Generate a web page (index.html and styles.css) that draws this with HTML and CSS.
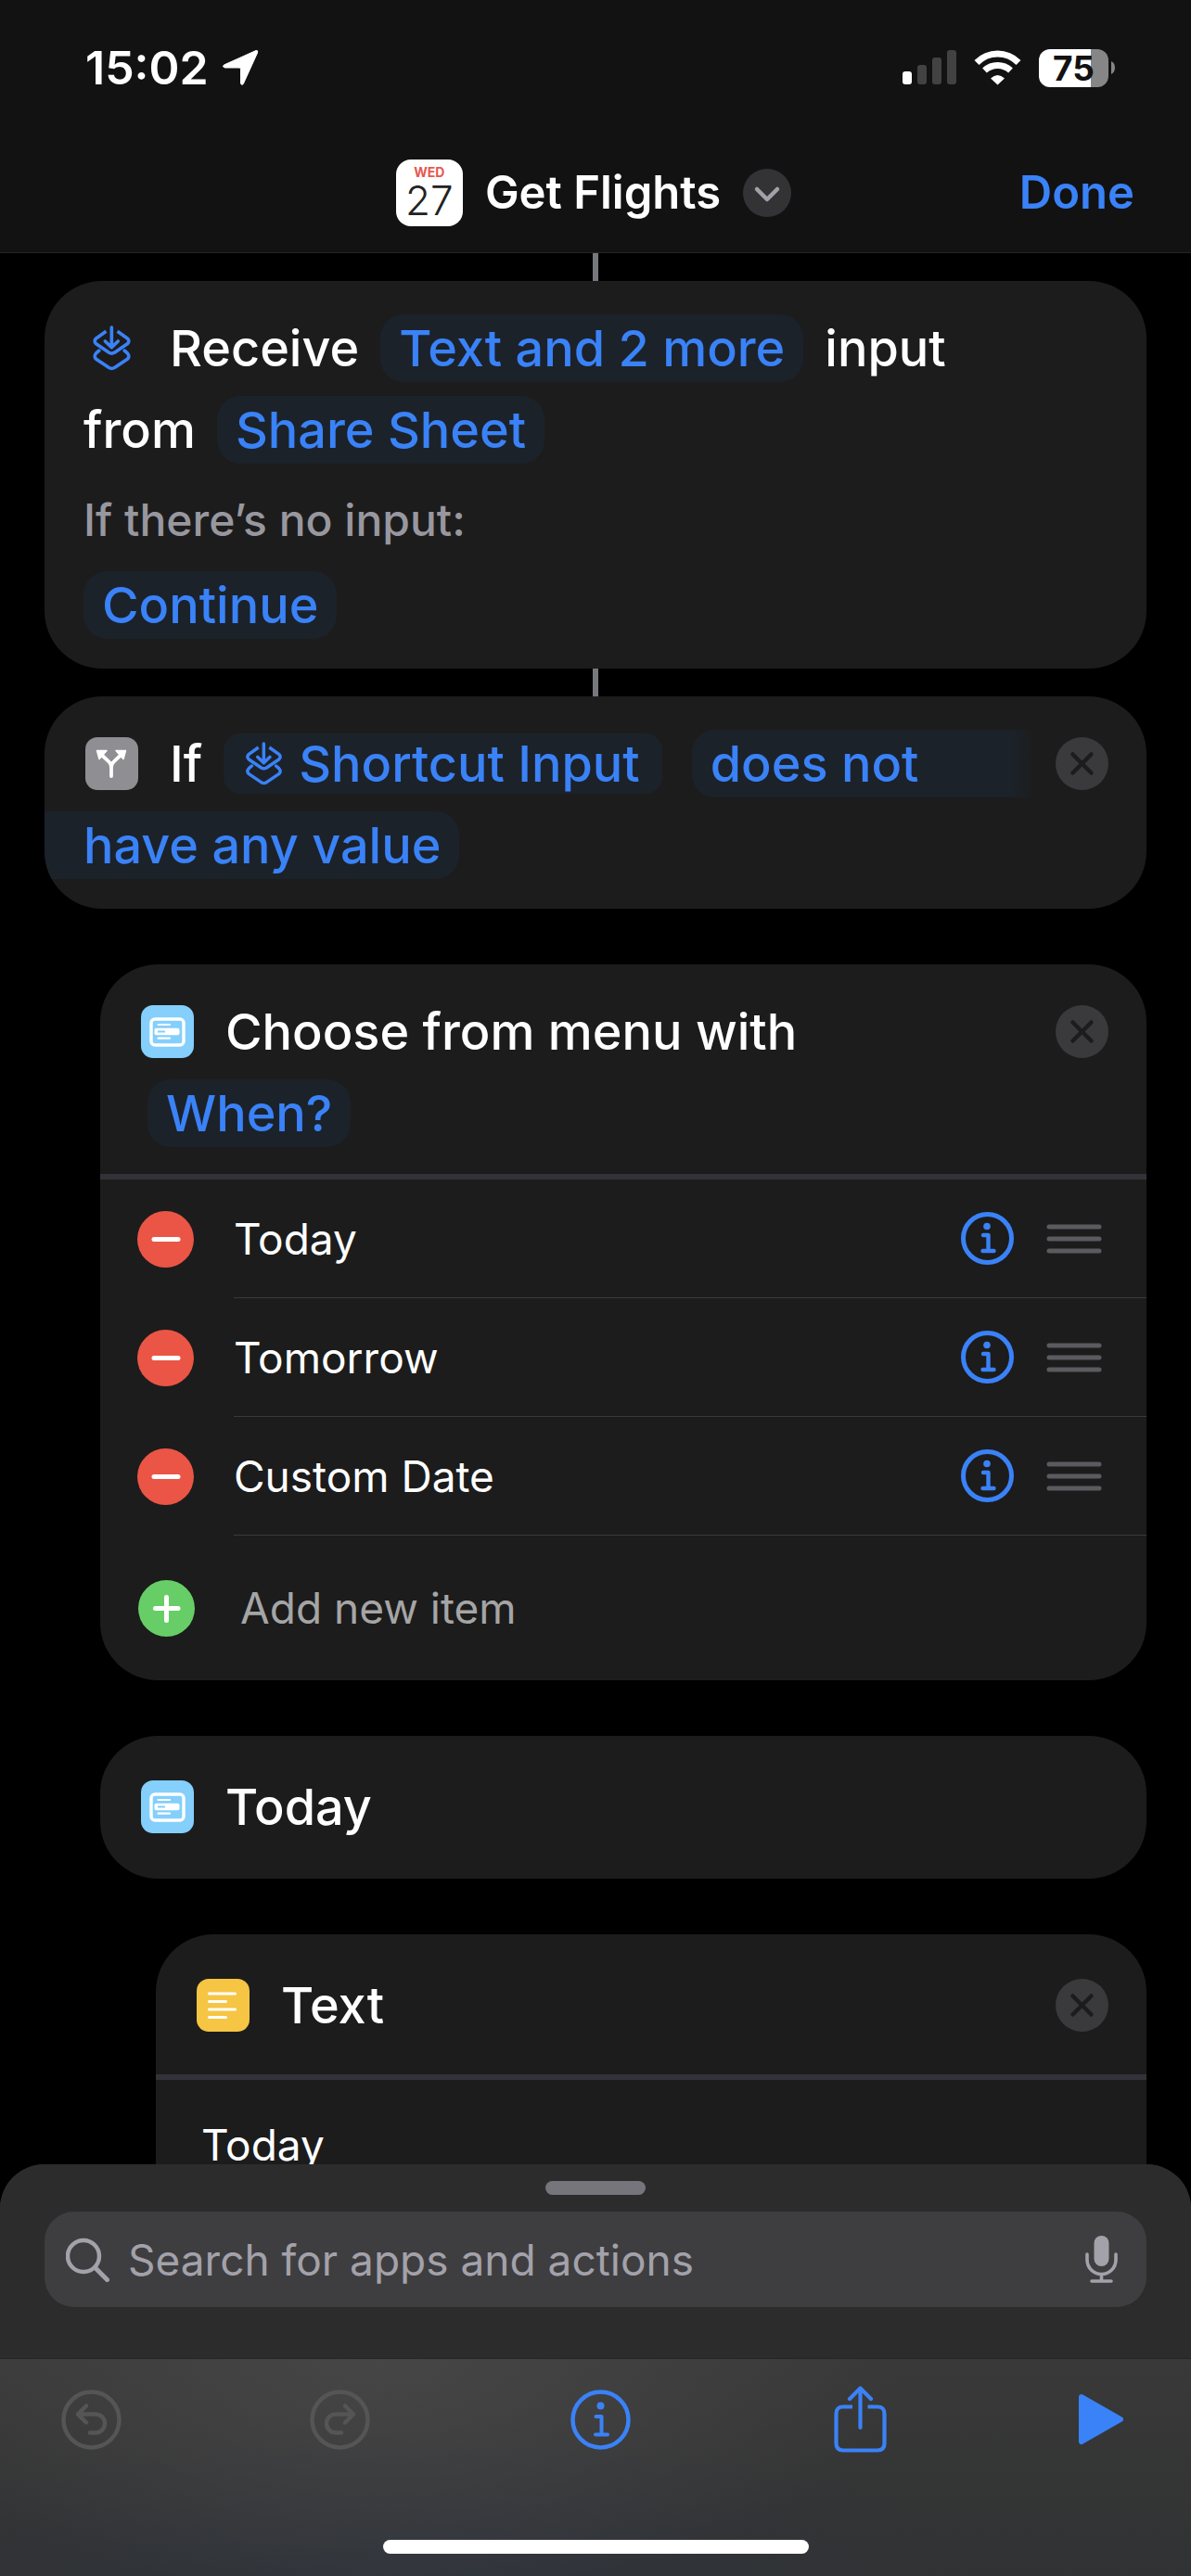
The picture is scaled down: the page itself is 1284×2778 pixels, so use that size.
FILE: index.html
```html
<!DOCTYPE html>
<html lang="en">
<head>
<meta charset="utf-8">
<meta name="viewport" content="width=device-width, initial-scale=1">
<title>Get Flights</title>
<link rel="stylesheet" href="styles.css">
</head>
<body>
<svg class="defs" aria-hidden="true">
  <symbol id="shortcut" viewBox="0 0 117 141">
    <g fill="none" stroke="currentColor" stroke-width="10.500" stroke-linecap="round" stroke-linejoin="round">
      <path d="M41 18 10 40Q1 49 10 57L50 84Q58 89 67 84L107 57Q116 49 107 40L76 18" stroke-linecap="butt"/>
      <path d="M19 78 10 86Q1 96 10 104L50 131Q58 136 67 131L107 104Q116 96 107 86L98 78"/>
      <path d="M58 6V66M38 49 58 68 78 49"/>
    </g>
  </symbol>
  <symbol id="close" viewBox="0 0 57 57">
    <circle cx="28.500" cy="28.500" r="28.500" fill="#3a3a3c"/>
    <path d="m18.500 18.500 20 20m0-20-20 20" stroke="#1c1c1c" stroke-width="4.500" stroke-linecap="round"/>
  </symbol>
  <symbol id="info" viewBox="0 0 57 57">
    <circle cx="28.500" cy="28.500" r="26" fill="none" stroke="currentColor" stroke-width="5"/>
    <circle cx="28" cy="15.500" r="3.800" fill="currentColor"/>
    <path d="M24 25h5.500v17M23.500 42h12" fill="none" stroke="currentColor" stroke-width="4.400" stroke-linecap="round" stroke-linejoin="round"/>
  </symbol>
  <symbol id="minus" viewBox="0 0 61 61">
    <circle cx="30.500" cy="30.500" r="30.500" fill="#eb5545"/>
    <path d="M18 30.500h26" stroke="#fff" stroke-width="5" stroke-linecap="round"/>
  </symbol>
  <symbol id="grip" viewBox="0 0 60 32">
    <path d="M3 3h54M3 16h54M3 29h54" stroke="#5b5a5f" stroke-width="5" stroke-linecap="round"/>
  </symbol>
  <symbol id="menu" viewBox="0 0 57 57">
    <rect width="57" height="57" rx="13" fill="#84cffb"/>
    <rect x="11" y="15" width="35" height="28" rx="4" fill="none" stroke="#fff" stroke-width="3.400"/>
    <path d="M18.500 21h12.500M18.500 35.700h12.500" stroke="#fff" stroke-width="2.200" stroke-linecap="round"/>
    <rect x="14.500" y="24.800" width="27" height="7.500" rx="2" fill="#fff"/>
    <path d="M18 28.500h8" stroke="#84cffb" stroke-width="2"/>
  </symbol>
</svg>

<div class="app">
  <header class="topbar">
    <div class="status">
      <div class="clock">
        <span>15:02</span>
        <svg width="40" height="40" viewBox="0 0 40 40"><path d="M37 1.500Q39.500 1 38.500 4L23.500 37Q22 40 20.500 37V21.500Q20.500 20 19 20H3.500Q0 19 2.500 17Z" fill="#fff" stroke="#fff" stroke-linejoin="round"/></svg>
      </div>
      <div class="signals">
        <svg width="58" height="38" viewBox="0 0 58 38"><rect y="23" width="10" height="14" rx="3" fill="#fff"/><g fill="#424242"><rect x="16" y="16" width="10" height="21" rx="3"/><rect x="32" y="8" width="10" height="29" rx="3"/><rect x="48" width="10" height="37" rx="3"/></g></svg>
        <svg class="wifi" width="51" height="38" viewBox="0 0 51 38"><g fill="none" stroke="#fff" stroke-width="7"><path d="M3 13.500Q12.500 4 25.500 4T48 13.500"/><path d="M11.500 22Q17.500 16.500 25.500 16.500T39.500 22"/></g><path d="M18 30.500Q25.500 23.500 33 30.500L25.500 37.500Z" fill="#fff"/></svg>
        <div class="battery"><span class="battery-level">75</span><svg class="battery-tip" width="4" height="14" viewBox="0 0 4 14"><path d="M0 0Q4 2 4 7T0 14Z" fill="#868686"/></svg></div>
      </div>
    </div>
    <nav class="nav">
      <button class="title" type="button">
        <span class="calendar"><span class="weekday">WED</span><span class="day">27</span></span>
        <span>Get Flights</span>
        <svg width="52" height="52" viewBox="0 0 52 52"><circle cx="26" cy="26" r="26" fill="#333335"/><path d="m15 22 11 11 11-11" fill="none" stroke="#a2a1a9" stroke-width="4.500" stroke-linecap="round" stroke-linejoin="round"/></svg>
      </button>
      <button class="done" type="button">Done</button>
    </nav>
  </header>

  <main class="canvas">
    <div class="connector"></div>
    <section class="card">
      <div class="card-head">
        <div class="line">
          <svg class="glyph" viewBox="0 0 117 141"><use href="#shortcut"/></svg>
          <span>Receive</span>
          <button class="chip" type="button">Text and 2 more</button>
          <span>input</span>
        </div>
        <div class="line">
          <span>from</span>
          <button class="chip" type="button">Share Sheet</button>
        </div>
        <div class="note">If there’s no input:</div>
        <div class="line">
          <button class="chip" type="button">Continue</button>
        </div>
      </div>
    </section>
    <div class="connector"></div>

    <section class="card">
      <div class="card-head">
        <div class="line">
          <svg class="tile" viewBox="0 0 57 57"><rect width="57" height="57" rx="13" fill="#8e8e93"/><path d="M28 42V33Q28 29 25 26L18 19.500M28 33Q28 29 31 26L38 19.500" fill="none" stroke="#fff" stroke-width="3.800" stroke-linecap="round"/><path d="M12.500 14.500H23L15 23.500ZM43.500 14.500H33L41 23.500Z" fill="#fff" stroke="#fff" stroke-width="1.500" stroke-linejoin="round"/></svg>
          <span>If</span>
          <button class="chip variable" type="button"><svg width="39" height="47"><use href="#shortcut"/></svg>Shortcut Input</button>
          <button class="chip chip-start" type="button">does not</button>
          <button class="icon-button" type="button" aria-label="Remove If"><svg width="57" height="57"><use href="#close"/></svg></button>
        </div>
        <div class="line">
          <button class="chip chip-end" type="button">have any value</button>
        </div>
      </div>
    </section>

    <section class="card indent-1">
      <div class="card-head with-body">
        <div class="line">
          <svg class="tile"><use href="#menu"/></svg>
          <span>Choose from menu with</span>
          <button class="icon-button push" type="button" aria-label="Remove menu"><svg width="57" height="57"><use href="#close"/></svg></button>
        </div>
        <div class="line inset">
          <button class="chip" type="button">When?</button>
        </div>
      </div>
      <ul class="options">
        <li class="option">
          <button class="icon-button" type="button" aria-label="Delete Today"><svg width="61" height="61"><use href="#minus"/></svg></button>
          <div class="option-body">
            <input class="field" type="text" aria-label="Menu item 1" value="Today">
            <button class="icon-button blue" type="button" aria-label="Today details"><svg width="57" height="57"><use href="#info"/></svg></button>
            <svg class="grip" width="60" height="32"><use href="#grip"/></svg>
          </div>
        </li>
        <li class="option">
          <button class="icon-button" type="button" aria-label="Delete Tomorrow"><svg width="61" height="61"><use href="#minus"/></svg></button>
          <div class="option-body">
            <input class="field" type="text" aria-label="Menu item 2" value="Tomorrow">
            <button class="icon-button blue" type="button" aria-label="Tomorrow details"><svg width="57" height="57"><use href="#info"/></svg></button>
            <svg class="grip" width="60" height="32"><use href="#grip"/></svg>
          </div>
        </li>
        <li class="option">
          <button class="icon-button" type="button" aria-label="Delete Custom Date"><svg width="61" height="61"><use href="#minus"/></svg></button>
          <div class="option-body">
            <input class="field" type="text" aria-label="Menu item 3" value="Custom Date">
            <button class="icon-button blue" type="button" aria-label="Custom Date details"><svg width="57" height="57"><use href="#info"/></svg></button>
            <svg class="grip" width="60" height="32"><use href="#grip"/></svg>
          </div>
        </li>
      </ul>
      <button class="add" type="button">
        <svg width="61" height="61" viewBox="0 0 61 61"><circle cx="30.500" cy="30.500" r="30.500" fill="#67ce67"/><path d="M30.500 18.500v25M18.500 30.500h24.500" stroke="#fff" stroke-width="5" stroke-linecap="round"/></svg>
        Add new item
      </button>
    </section>

    <section class="card indent-1">
      <div class="card-head single">
        <div class="line">
          <svg class="tile"><use href="#menu"/></svg>
          <span>Today</span>
        </div>
      </div>
    </section>

    <section class="card indent-2">
      <div class="card-head single with-body">
        <div class="line">
          <svg class="tile" viewBox="0 0 57 57"><rect width="57" height="57" rx="13" fill="#f5c543"/><path d="M13.500 16h28M13.500 24.500h18M13.500 33h28M13.500 41.500h18" stroke="#fff" stroke-width="3" stroke-linecap="round"/></svg>
          <span>Text</span>
          <button class="icon-button push" type="button" aria-label="Remove Text"><svg width="57" height="57"><use href="#close"/></svg></button>
        </div>
      </div>
      <textarea class="text-body" rows="3" aria-label="Text content">Today</textarea>
    </section>
  </main>

  <footer class="sheet">
    <div class="drawer">
      <div class="handle"></div>
      <label class="search">
        <svg width="48" height="48" viewBox="0 0 48 48" fill="none" stroke="#a3a1aa" stroke-width="4.500" stroke-linecap="round"><circle cx="19" cy="20" r="17"/><path d="m31.500 32.500 13 13" stroke-width="5"/></svg>
        <input class="search-input" type="text" placeholder="Search for apps and actions" aria-label="Search for apps and actions">
        <svg width="35" height="51" viewBox="0 0 35 51"><rect x="9.500" y="0" width="16" height="33" rx="8" fill="#a3a1aa"/><path d="M2 20v6a15.500 15.500 0 0 0 31 0v-6M17.500 42v7M7 49h21" fill="none" stroke="#a3a1aa" stroke-width="3.600" stroke-linecap="round"/></svg>
      </label>
    </div>
    <div class="toolbar">
      <button class="tool muted" type="button" aria-label="Undo"><svg width="65" height="65" viewBox="0 0 65 65" fill="none" stroke="currentColor" stroke-width="4.500" stroke-linecap="round" stroke-linejoin="round"><circle cx="32.500" cy="32.500" r="30"/><path d="M27 17.500 18 26.500 27 35.500M18 26.500H37A10 10 0 0 1 37 46.500H31"/></svg></button>
      <button class="tool muted" type="button" aria-label="Redo"><svg width="65" height="65" viewBox="0 0 65 65" fill="none" stroke="currentColor" stroke-width="4.500" stroke-linecap="round" stroke-linejoin="round"><circle cx="32.500" cy="32.500" r="30"/><path d="M38 17.500 47 26.500 38 35.500M47 26.500H28A10 10 0 0 0 28 46.500H34"/></svg></button>
      <button class="tool" type="button" aria-label="Info"><svg width="65" height="65" viewBox="0 0 65 65" fill="none" stroke="currentColor" stroke-width="4.500" stroke-linecap="round" stroke-linejoin="round"><circle cx="32.500" cy="32.500" r="30"/><circle cx="32.500" cy="17.500" r="4" fill="currentColor" stroke="none"/><path d="M27.500 29H33.500V48.500M27 48.500H40" stroke-width="4"/></svg></button>
      <button class="tool" type="button" aria-label="Share"><svg width="57" height="72" viewBox="0 0 57 72" fill="none" stroke="currentColor" stroke-width="4.200" stroke-linecap="round" stroke-linejoin="round"><path d="M20 22.500H10Q2.500 22.500 2.500 30V62Q2.500 69.500 10 69.500H47Q54.500 69.500 54.500 62V30Q54.500 22.500 47 22.500H36.500" stroke-linecap="butt"/><path d="M28.500 3V45M17 14 28.500 2.500 40 14"/></svg></button>
      <button class="tool" type="button" aria-label="Run"><svg width="48" height="54" viewBox="0 0 48 54"><path d="M3 3 45 27 3 51Z" fill="currentColor" stroke="currentColor" stroke-width="6" stroke-linejoin="round"/></svg></button>
    </div>
    <div class="home"></div>
  </footer>
</div>
</body>
</html>
```
FILE: styles.css
```css
* {
  box-sizing: border-box;
}

body {
  margin: 0;
  background: #000;
  color: #fff;
  font-family: Inter, "Liberation Sans", sans-serif;
  font-size: 54px;
  font-weight: 500;
}

button,
input,
textarea {
  margin: 0;
  padding: 0;
  border: 0;
  background: none;
  color: inherit;
  font: inherit;
}

svg {
  display: block;
  flex: none;
}

.defs {
  position: absolute;
  width: 0;
  height: 0;
}

.app {
  display: flex;
  flex-direction: column;
  height: 100vh;
}

/* Top bar */
.topbar {
  flex: none;
  padding-top: 46px;
  background: #121212;
  border-bottom: 1px solid #252525;
}

.status {
  display: flex;
  align-items: center;
  justify-content: space-between;
  height: 54px;
  padding: 0 82px 0 92px;
}

.clock {
  display: flex;
  align-items: center;
  gap: 14px;
  font-size: 50px;
  font-weight: 600;
}

.signals {
  display: flex;
  align-items: center;
}

.wifi {
  margin: 0 19px;
}

.battery {
  display: flex;
  align-items: center;
  gap: 3px;
}

.battery-level {
  width: 75px;
  border-radius: 12px;
  background: linear-gradient(90deg, #fff 75%, #868686 75%);
  color: #121212;
  font-size: 37px;
  font-weight: 700;
  line-height: 41px;
  text-align: center;
}

.nav {
  display: grid;
  grid-template-columns: 1fr auto 1fr;
  align-items: center;
  height: 172px;
  padding: 43px 61px 0 57px;
}

.title {
  display: flex;
  grid-column: 2;
  align-items: center;
  gap: 24px;
  font-size: 49px;
  font-weight: 600;
}

.calendar {
  display: flex;
  flex-direction: column;
  align-items: center;
  width: 72px;
  height: 72px;
  padding-top: 5px;
  border-radius: 16px;
  background: #fff;
}

.weekday {
  color: #e5584f;
  font-size: 14px;
  font-weight: 700;
  line-height: 18px;
}

.day {
  color: #222;
  font-size: 44px;
  font-weight: 300;
  line-height: 42px;
}

.done {
  justify-self: end;
  color: #3a82f7;
  font-size: 49px;
  font-weight: 600;
}

/* Actions */
.canvas {
  flex: 1;
  min-height: 0;
  overflow: hidden;
  padding: 0 48px;
}

.connector {
  width: 6px;
  height: 30px;
  margin: 0 auto;
  background: #77787e;
}

.card {
  overflow: hidden;
  border-radius: 62px;
  background: #1c1c1c;
}

.card + .card {
  margin-top: 60px;
}

.indent-1 {
  margin-left: 60px;
}

.indent-2 {
  margin-left: 120px;
}

.card-head {
  display: flex;
  flex-direction: column;
  gap: 15px;
  padding: 36px 41px 32px 42px;
}

.card-head.with-body {
  padding-bottom: 29px;
  border-bottom: 6px solid #333238;
}

.card-head.single {
  padding-top: 40px;
  padding-bottom: 41px;
}

.card-head.single.with-body {
  padding-bottom: 38px;
}

.line {
  display: flex;
  align-items: center;
  gap: 23px;
  height: 73px;
  white-space: nowrap;
}

.line.inset {
  padding-left: 9px;
}

.tile,
.glyph {
  width: 57px;
  height: 57px;
  margin: 0 11px 0 2px;
}

.glyph {
  height: 49px;
  color: #3a82f7;
}

.chip {
  height: 73px;
  padding: 0 20px;
  border-radius: 25px;
  background: #1c222a;
  color: #3a82f7;
}

.variable {
  display: flex;
  align-items: center;
  gap: 18px;
  height: 65px;
  margin-right: 9px;
  padding: 0 24px;
  border-radius: 18px;
}

.chip-start {
  flex: 1;
  border-radius: 25px 0 0 25px;
  background: linear-gradient(90deg, #1c222a calc(100% - 24px), #1c1c1c);
  text-align: left;
}

.chip-end {
  margin-left: -42px;
  padding-left: 42px;
  border-radius: 0 25px 25px 0;
}

.icon-button {
  flex: none;
}

.push {
  margin-left: auto;
}

.blue {
  color: #3a82f7;
}

.note {
  padding-top: 6px;
  color: #98979f;
  font-size: 48px;
  line-height: 80px;
}

.options {
  margin: 0;
  padding: 0 0 0 40px;
  list-style: none;
  font-size: 46px;
  font-weight: 400;
}

.option {
  display: flex;
  align-items: center;
  gap: 43px;
}

.option-body {
  display: flex;
  flex: 1;
  align-items: center;
  height: 128px;
  padding-right: 48px;
  border-bottom: 1px solid #3b3b3d;
}

.field {
  flex: 1;
  min-width: 0;
}

.grip {
  margin-left: 35px;
}

.add {
  display: flex;
  align-items: center;
  gap: 49px;
  width: 100%;
  height: 156px;
  padding: 0 41px;
  color: #a5a5a5;
  font-size: 46px;
  font-weight: 400;
}

.text-body {
  display: block;
  width: 100%;
  padding: 40px 49px;
  font-size: 46px;
  font-weight: 400;
  line-height: 60px;
  resize: none;
}

/* Bottom sheet */
.sheet {
  flex: none;
  overflow: hidden;
  border-radius: 48px 48px 0 0;
  background:
    radial-gradient(ellipse 560px 260px at 32% 209px, #464647, transparent),
    radial-gradient(ellipse 600px 150px at 35% 100%, #2f343c, transparent),
    linear-gradient(#393939 209px, #313233);
}

.drawer {
  padding: 18px 48px 55px;
  border-bottom: 1px solid #252525;
  background: #2c2c2c;
}

.handle {
  width: 108px;
  height: 15px;
  margin: 0 auto 18px;
  border-radius: 8px;
  background: #76757b;
}

.search {
  display: flex;
  align-items: center;
  height: 103px;
  padding: 0 31px 0 23px;
  border-radius: 32px;
  background: #3e3e40;
}

.search-input {
  flex: 1;
  min-width: 0;
  margin-left: 19px;
  font-size: 46px;
  font-weight: 400;
}

.search-input::placeholder {
  color: #a3a1aa;
  opacity: 1;
}

.toolbar {
  display: grid;
  grid-template-columns: 268fr 281fr 284fr 264fr auto;
  align-items: center;
  padding: 29px 73px 0 66px;
}

.tool {
  justify-self: start;
  color: #3a82f7;
}

.muted {
  color: #555556;
}

.home {
  width: 459px;
  height: 15px;
  margin: 94px auto 24px;
  border-radius: 8px;
  background: #fff;
}
```
